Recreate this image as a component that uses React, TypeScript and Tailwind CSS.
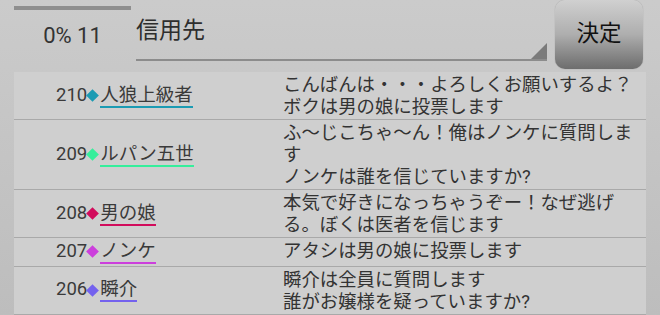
import React from 'react';

type Post = {
  no: number;
  name: string;
  color: string;
  lines: string[];
};

const posts: Post[] = [
  { no: 210, name: '人狼上級者', color: '#1b9bb3', lines: ['こんばんは・・・よろしくお願いするよ？', 'ボクは男の娘に投票します'] },
  { no: 209, name: 'ルパン五世', color: '#35ee9b', lines: ['ふ〜じこちゃ〜ん！俺はノンケに質問しま', 'す', 'ノンケは誰を信じていますか?'] },
  { no: 208, name: '男の娘', color: '#d20c5c', lines: ['本気で好きになっちゃうぞー！なぜ逃げ', 'る。ぼくは医者を信じます'] },
  { no: 207, name: 'ノンケ', color: '#cc3fdc', lines: ['アタシは男の娘に投票します'] },
  { no: 206, name: '瞬介', color: '#7462ee', lines: ['瞬介は全員に質問します', '誰がお嬢様を疑っていますか?'] },
];

const font = { fontFamily: "Roboto, 'Noto Sans CJK JP', sans-serif" };

function Row({ post }: { post: Post }) {
  return (
    <div className="flex border-b border-[#a9a9a9]">
      <div className="flex w-[269px] shrink-0 items-center pl-[42px] text-[18.5px] text-[#3a3a3a]">
        <span>{post.no}</span>
        <span className="mx-[1px] h-[9px] w-[9px] rotate-45" style={{ backgroundColor: post.color }} />
        <span className="ml-[2px] border-b-2 pt-px leading-[21px]" style={{ borderColor: post.color }}>
          {post.name}
        </span>
      </div>
      <div className="pt-0.5 pb-px text-[18.4px] leading-[22px] text-[#333]">
        {post.lines.map((l, i) => (
          <div key={i}>{l}</div>
        ))}
      </div>
    </div>
  );
}

export default function App() {
  return (
    <div
      className="h-[315px] w-[660px] overflow-hidden bg-linear-to-b from-[#cbcbcb] to-[#bdbdbd]"
      style={font}
    >
      {/* header */}
      <div className="flex h-[72px] pl-[14px]">
        <div className="flex w-[117px] shrink-0 flex-col items-center pt-[6px]">
          <div className="h-[4px] w-full bg-[#8f8f8f]" />
          <div className="mt-[12px] text-[22px] leading-[28px] text-[#333]">0% 11</div>
        </div>
        <div className="relative ml-[5px] h-[61px] w-[411px] border-b-2 border-[#8c8c8c]">
          <div className="pt-[17px] text-[23px] leading-[28px] text-[#2e2e2e]">信用先</div>
          <div className="absolute right-0 bottom-0 h-0 w-0 border-b-[16px] border-l-[16px] border-b-[#7b7b7b] border-l-transparent" />
        </div>
        <button className="ml-[8px] flex h-[69px] w-[88px] items-center justify-center rounded-[10px] bg-linear-to-b from-[#d0d0d0] via-[#aeaeae] to-[#6d6d6d] pb-[2px] text-[22.5px] text-[#111] shadow-[0_0_1px_#888]">
          決定
        </button>
      </div>

      {/* list */}
      <div className="ml-[14px] w-[632px] bg-[#cfcfcf]">
        {posts.map((p) => (
          <Row key={p.no} post={p} />
        ))}
      </div>
    </div>
  );
}
